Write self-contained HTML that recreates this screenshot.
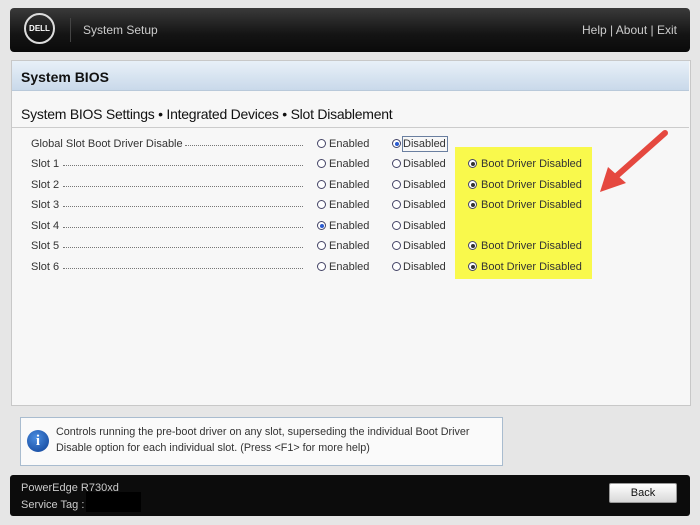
<!DOCTYPE html><html><head><style>
body{margin:0;width:700px;height:525px;background:#e6e6e6;font-family:"Liberation Sans",sans-serif;position:relative;overflow:hidden}
.a{position:absolute}
.hdr{left:10px;top:8px;width:680px;height:44px;border-radius:4px;background:linear-gradient(#3a3a3a,#141414 60%,#0a0a0a)}
.panel{left:11px;top:60px;width:678px;height:344px;background:#f7f7f7;border:1px solid #c8c8c8}
.title{left:12px;top:61px;width:677px;height:29px;background:linear-gradient(#e8f0f8,#c9d9ea);border-bottom:1px solid #b9c9da;font-weight:bold;font-size:14px;color:#111;line-height:33px;text-indent:9px}
.t{font-size:11px;color:#333;white-space:nowrap}
.dots{border-bottom:1px dotted #777;height:0}
.r{width:7px;height:7px;border:1px solid #446;border-radius:50%;background:#fff}
.r.on::after{content:"";position:absolute;left:1.5px;top:1.5px;width:4px;height:4px;border-radius:50%;background:#2a5bd0}
.r.bd::after{content:"";position:absolute;left:1.5px;top:1.5px;width:4px;height:4px;border-radius:50%;background:#333}
.foot{left:10px;top:475px;width:680px;height:41px;background:#0c0c0c;border-radius:3px}
</style></head><body>
<div class="a hdr"></div>
<div class="a" style="left:24px;top:13px;width:31px;height:31px;border:2px solid #ddd;border-radius:50%;box-sizing:border-box;color:#fff;font-weight:bold;font-size:8px;line-height:27px;text-align:center">DELL</div>
<div class="a" style="left:70px;top:18px;width:1px;height:24px;background:#444"></div>
<div class="a" style="left:83px;top:23px;font-size:12px;color:#ccc">System Setup</div>
<div class="a" style="left:582px;top:23px;font-size:12px;color:#ccc">Help | About | Exit</div>
<div class="a panel"></div>
<div class="a title">System BIOS</div>
<div class="a" style="left:21px;top:106px;font-size:14px;letter-spacing:-0.25px;color:#111">System BIOS Settings • Integrated Devices • Slot Disablement</div>
<div class="a" style="left:12px;top:127px;width:677px;height:1px;background:#ccc"></div>
<div class="a" style="left:455px;top:147px;width:137px;height:132px;background:#f9f94c"></div>
<svg class="a" style="left:590px;top:125px" width="80" height="80"><line x1="75" y1="8" x2="22" y2="55" stroke="#e5483f" stroke-width="6" stroke-linecap="round"/><polygon points="10,67 18,42 36,58" fill="#e5483f"/></svg>
<div id="rows"></div>
<script>
var L=["Global Slot Boot Driver Disable","Slot 1","Slot 2","Slot 3","Slot 4","Slot 5","Slot 6"],Y=[143,163,184,204,225,245,266],h="";
for(var i=0;i<7;i++){var y=Y[i];var w=i==0?152:30;
h+='<div class="a t" style="left:31px;top:'+(y-5)+'px">'+L[i]+'</div>';
h+='<div class="a dots" style="left:'+(31+w+2)+'px;top:'+(y+2)+'px;width:'+(303-31-w-2)+'px"></div>';
h+='<div class="a r'+(i==4?' on':'')+'" style="left:317px;top:'+(y-4)+'px"></div><div class="a t" style="left:329px;top:'+(y-5)+'px">Enabled</div>';
h+='<div class="a r'+(i==0?' on':'')+'" style="left:392px;top:'+(y-4)+'px"></div><div class="a t" style="left:403px;top:'+(y-5)+'px">Disabled</div>';
if(i>0&&i!=4)h+='<div class="a r bd" style="left:468px;top:'+(y-4)+'px"></div><div class="a t" style="left:481px;top:'+(y-5)+'px">Boot Driver Disabled</div>';}
h+='<div class="a" style="left:402px;top:136px;width:44px;height:14px;border:1px solid #6a7fa0"></div>';
document.getElementById("rows").innerHTML=h;
</script>
<div class="a" style="left:20px;top:417px;width:481px;height:47px;background:#fafafa;border:1px solid #a9bccf"></div>
<div class="a" style="left:27px;top:430px;width:22px;height:22px;border-radius:50%;background:radial-gradient(circle at 40% 35%,#4a8de0,#0d3f95);color:#fff;font-weight:bold;font-size:15px;text-align:center;line-height:22px;font-family:'Liberation Serif',serif">i</div>
<div class="a" style="left:56px;top:424px;font-size:10.8px;color:#333;line-height:16px">Controls running the pre-boot driver on any slot, superseding the individual Boot Driver<br>Disable option for each individual slot. (Press &lt;F1&gt; for more help)</div>
<div class="a foot"></div>
<div class="a" style="left:21px;top:480px;font-size:11px;color:#ccc;line-height:17px">PowerEdge R730xd<br>Service Tag :</div>
<div class="a" style="left:86px;top:492px;width:55px;height:20px;background:#000"></div>
<div class="a" style="left:609px;top:483px;width:68px;height:20px;border-radius:2px;background:linear-gradient(#fff,#d8d8d8);border:1px solid #999;box-sizing:border-box;font-size:11px;text-align:center;line-height:18px;color:#111">Back</div>
</body></html>
